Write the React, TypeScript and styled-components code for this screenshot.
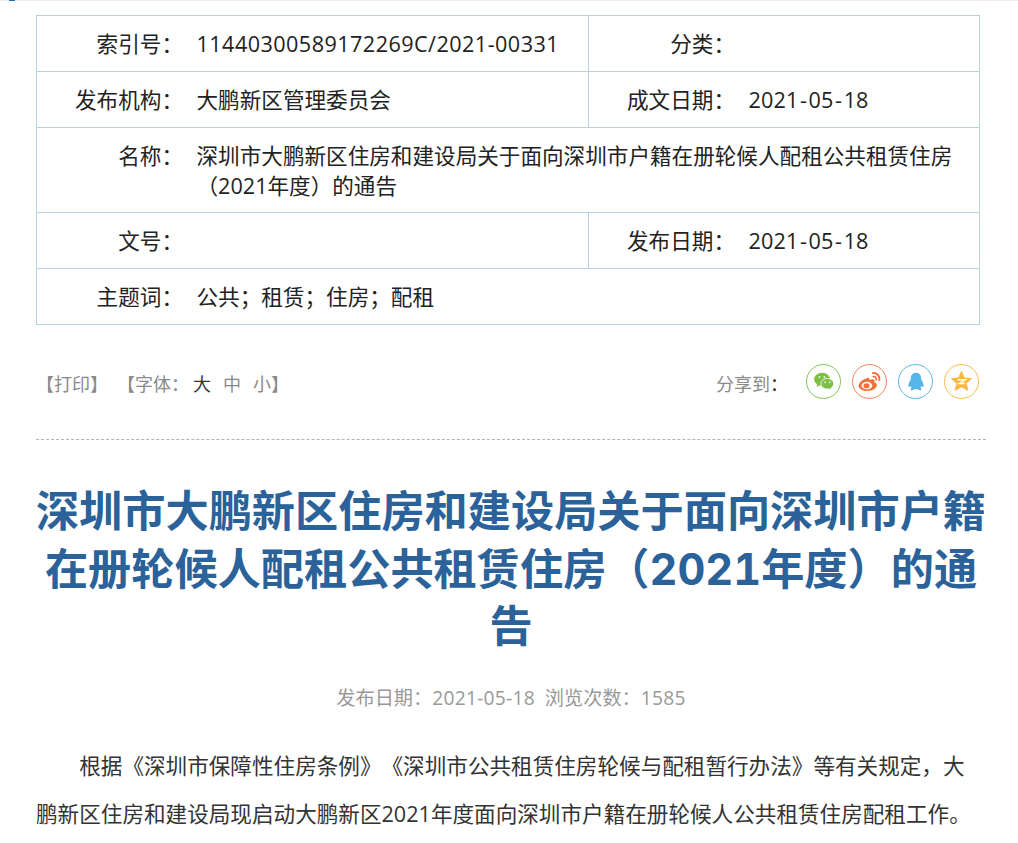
import React from "react";
import styled, { createGlobalStyle } from "styled-components";

const Global = createGlobalStyle`
  html, body { margin: 0; padding: 0; background: #fff; overflow: hidden; }
  body {
    font-family: "Open Sans", "Noto Sans CJK SC", sans-serif;
    text-spacing-trim: space-all;
  }
`;

const Page = styled.div`
  width: 1018px;
  height: 843px;
  overflow: hidden;
`;

const TopBar = styled.div`
  height: 1px;
  background: #eceff3;
  display: flex;
  padding-left: 9px;
`;

const TopMark = styled.span`
  width: 6px;
  height: 1px;
  background: #2a6ab0;
`;

const Content = styled.main`
  padding: 14px 32px 0 36px;
`;

const InfoTable = styled.table`
  width: 944px;
  border-collapse: collapse;
  table-layout: fixed;
  font-size: 21.6px;
  color: #222;
`;

const Row = styled.tr<{ $tall?: boolean }>`
  height: ${(p) => (p.$tall ? "85px" : "56px")};
`;

const Label = styled.th`
  border: 1px solid #b5d2e6;
  border-right: none;
  font-weight: 400;
  text-align: right;
  vertical-align: top;
  padding: 13px 0 0 0;
  line-height: 30px;
  white-space: nowrap;
`;

const Value = styled.td`
  border: 1px solid #b5d2e6;
  border-left: none;
  vertical-align: top;
  padding: 13px 24px 0 13.5px;
  line-height: 30px;
`;

const Num = styled.span<{ $sp?: number }>`
  letter-spacing: ${(p) => p.$sp ?? 0.14}px;
`;

const Hy = styled.span`
  padding: 0 1.5px;
`;

const Toolbar = styled.div`
  display: flex;
  justify-content: space-between;
  align-items: center;
  height: 115px;
  width: 950px;
  border-bottom: 1px dashed #b4b4b4;
  box-sizing: border-box;
  padding-bottom: 2px;
  color: #8a8a8a;
  font-size: 18px;
`;

const ToolLeft = styled.div`
  display: flex;
  white-space: pre;
  padding-top: 4px;
`;

const ToolGroup = styled.span`
  display: flex;
  margin-left: 9px;
  &:first-child { margin-left: 0; }
`;

const FontLink = styled.span<{ $active?: boolean }>`
  color: ${(p) => (p.$active ? "#333" : "#8a8a8a")};
  margin-left: ${(p) => (p.$active ? "4px" : "12px")};
`;

const ToolRight = styled.div`
  display: flex;
  align-items: center;
  padding-right: 7px;
`;

const ShareLabel = styled.span`
  margin-right: 19px;
  width: 71px;
  padding-top: 4px;
  white-space: nowrap;
`;

const Colon = styled.span`
  color: #333;
`;

const Shares = styled.div`
  display: flex;
  gap: 11px;
`;

const Share = styled.span<{ $c: string }>`
  width: 35px;
  height: 35px;
  box-sizing: border-box;
  border: 1px solid ${(p) => p.$c};
  border-radius: 50%;
  display: flex;
  align-items: center;
  justify-content: center;
`;

const Title = styled.h1`
  width: 951px;
  margin: 0 0 0 -0.5px;
  padding-top: 43px;
  text-align: center;
  color: #2a6299;
  font-family: "Inter", "Noto Sans CJK SC", sans-serif;
  font-variant-numeric: tabular-nums;
  font-size: 43.2px;
  font-weight: 700;
  line-height: 57.6px;
`;

const Meta = styled.div`
  width: 950px;
  margin-top: 29px;
  text-align: center;
  color: #999;
  font-size: 19.2px;
  line-height: 26px;
  white-space: pre;
`;

const MetaNum = styled.span`
  font-weight: 500;
  letter-spacing: 0.25px;
`;

const Body = styled.p`
  width: 950px;
  margin: 31px 0 0;
  color: #333;
  font-size: 21.6px;
  line-height: 48px;
  text-indent: 2em;
`;

const WeChat = () => (
  <svg width="22" height="19" viewBox="0 0 28 25">
    <path d="M11.5 1C5.7 1 1 4.900 1 9.600c0 2.800 1.600 5.100 4.100 6.700L4 19.600l3.800-2c1.100.3 2.300.5 3.700.5h.8C22 18.100 22 9.600 22 9.600 22 4.900 17.300 1 11.500 1z" fill="#7cbf41" />
    <path d="M18.500 8.500c-4.700 0-8.500 3.100-8.500 7s3.800 7 8.500 7c1 0 1.900-.1 2.800-.4l3 1.700-.8-2.800c2-1.300 3.300-3.300 3.300-5.500 0-3.900-3.800-7-8.300-7z" fill="#7cbf41" stroke="#fff" strokeWidth="1.2" />
    <circle cx="8" cy="6.500" r="1.300" fill="#e8f3dc" />
    <circle cx="14.500" cy="6.500" r="1.300" fill="#e8f3dc" />
    <circle cx="15.500" cy="13.500" r="1.200" fill="#e8f3dc" />
    <circle cx="21.500" cy="13.500" r="1.200" fill="#e8f3dc" />
  </svg>
);

const Weibo = () => (
  <svg width="23" height="19" viewBox="0 0 24 20">
    <path d="M9.500 6.500C5 7.500 .5 11 .5 14.500.5 18 5 20 9.500 20c5.500 0 10.300-3 10.300-6.300 0-1.700-1.500-2.500-2.700-3 .4-1 .5-2-.2-2.600-1-.8-3.200-.4-4.900.3.300-1.500-.5-2.900-2.500-1.900z" fill="#f4703a" />
    <ellipse cx="9.300" cy="14.300" rx="5.700" ry="4" fill="#fff" />
    <ellipse cx="8.800" cy="14.500" rx="3.200" ry="2.700" fill="#f4703a" />
    <path d="M15.500 1.200c4-.6 7.600 2.700 6.800 7.200" fill="none" stroke="#f4703a" strokeWidth="2" strokeLinecap="round" />
    <path d="M16 4.800c2-.3 3.400 1.100 3.100 3.200" fill="none" stroke="#f4703a" strokeWidth="1.800" strokeLinecap="round" />
  </svg>
);

const Qq = () => (
  <svg width="16" height="19" viewBox="0 0 21 24">
    <path d="M10.500 .5C6 .5 3.800 3.800 3.800 7.500c0 1-.1 1.800-.5 2.500C1.800 12.300 .5 15 .5 17.500c0 1.500.7 2 1.600 1.300l1.200-1c.3.900.8 1.700 1.500 2.400C3.500 20.900 3 21.800 3.500 22.700c.6 1 3.300 1 5-.5.700-.2 1.300-.3 2-.3s1.300.1 2 .3c1.700 1.500 4.400 1.500 5 .5.500-.9 0-1.800-1.300-2.500.7-.7 1.200-1.500 1.500-2.400l1.200 1c.9.700 1.600.2 1.600-1.300 0-2.500-1.300-5.200-2.800-7.500-.4-.7-.5-1.500-.5-2.500C17.200 3.800 15 .5 10.500 .5z" fill="#55b6ea" />
  </svg>
);

const Qzone = () => (
  <svg width="21" height="20" viewBox="0 0 22 21">
    <path d="M11 .5l3 6.800 7.500.7-5.600 5 1.700 7.300L11 16.500l-6.600 3.800 1.700-7.300L.5 8l7.500-.7z" fill="#fdb640" stroke="#fdb640" strokeLinejoin="round" />
    <path d="M7 9.200h8l-6.500 3.900H15" fill="none" stroke="#fff" strokeWidth="1.500" />
  </svg>
);

const DateText = () => (
  <Num>2021<Hy>-</Hy>05<Hy>-</Hy>18</Num>
);

export default function App() {
  return (
    <Page>
      <Global />
      <TopBar><TopMark /></TopBar>
      <Content>
        <InfoTable>
          <colgroup>
            <col style={{ width: 146.5 }} />
            <col style={{ width: 405.5 }} />
            <col style={{ width: 146.5 }} />
            <col style={{ width: 244.5 }} />
          </colgroup>
          <tbody>
            <Row>
              <Label>索引号：</Label>
              <Value><Num $sp={0.45}>11440300589172269C/2021-00331</Num></Value>
              <Label>分类：</Label>
              <Value />
            </Row>
            <Row>
              <Label>发布机构：</Label>
              <Value>大鹏新区管理委员会</Value>
              <Label>成文日期：</Label>
              <Value><DateText /></Value>
            </Row>
            <Row $tall>
              <Label>名称：</Label>
              <Value colSpan={3}>深圳市大鹏新区住房和建设局关于面向深圳市户籍在册轮候人配租公共租赁住房（2021年度）的通告</Value>
            </Row>
            <Row>
              <Label>文号：</Label>
              <Value />
              <Label>发布日期：</Label>
              <Value><DateText /></Value>
            </Row>
            <Row>
              <Label>主题词：</Label>
              <Value colSpan={3}>公共；租赁；住房；配租</Value>
            </Row>
          </tbody>
        </InfoTable>
        <Toolbar>
          <ToolLeft>
            <ToolGroup>【打印】</ToolGroup>
            <ToolGroup>【字体：<FontLink $active>大</FontLink><FontLink>中</FontLink><FontLink>小</FontLink>】</ToolGroup>
          </ToolLeft>
          <ToolRight>
            <ShareLabel>分享到<Colon>：</Colon></ShareLabel>
            <Shares>
              <Share $c="#85c555"><WeChat /></Share>
              <Share $c="#f4845a"><Weibo /></Share>
              <Share $c="#5cb6ea"><Qq /></Share>
              <Share $c="#fdbb50"><Qzone /></Share>
            </Shares>
          </ToolRight>
        </Toolbar>
        <Title>深圳市大鹏新区住房和建设局关于面向深圳市户籍在册轮候人配租公共租赁住房（2021年度）的通告</Title>
        <Meta>发布日期：<MetaNum>2021-05-18</MetaNum>  浏览次数：<MetaNum>1585</MetaNum></Meta>
        <Body>根据《深圳市保障性住房条例》《深圳市公共租赁住房轮候与配租暂行办法》等有关规定，大鹏新区住房和建设局现启动大鹏新区2021年度面向深圳市户籍在册轮候人公共租赁住房配租工作。</Body>
      </Content>
    </Page>
  );
}
